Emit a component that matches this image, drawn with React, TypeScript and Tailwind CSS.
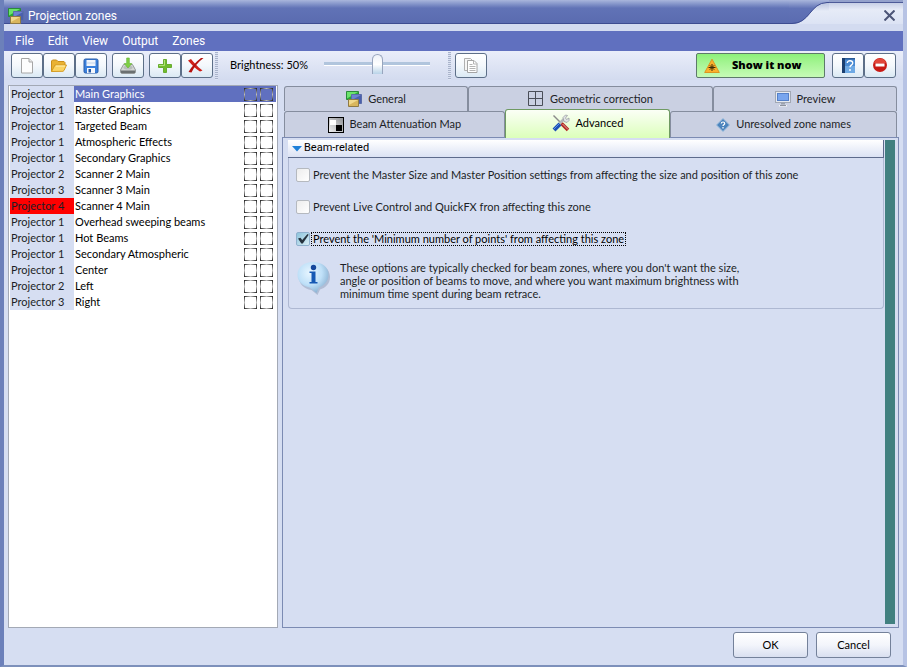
import { useState } from 'react';

const menus = ['File', 'Edit', 'View', 'Output', 'Zones'];

const zones = [
  { projector: 1, name: 'Main Graphics' },
  { projector: 1, name: 'Raster Graphics' },
  { projector: 1, name: 'Targeted Beam' },
  { projector: 1, name: 'Atmospheric Effects' },
  { projector: 1, name: 'Secondary Graphics' },
  { projector: 2, name: 'Scanner 2 Main' },
  { projector: 3, name: 'Scanner 3 Main' },
  { projector: 4, name: 'Scanner 4 Main' },
  { projector: 1, name: 'Overhead sweeping beams' },
  { projector: 1, name: 'Hot Beams' },
  { projector: 1, name: 'Secondary Atmospheric' },
  { projector: 1, name: 'Center' },
  { projector: 2, name: 'Left' },
  { projector: 3, name: 'Right' }
];

const toolButton =
  'flex h-[25px] w-8 items-center justify-center rounded-[3px] border border-[#5d6f88] bg-gradient-to-b from-white via-[#f4f8fc] to-[#dbe9f4]';
const tabBase =
  'flex h-full items-center justify-center border border-b-0 border-[#858d9e] bg-[#cad0e2] rounded-t-[3px] text-[#1c1e26]';

function ZonesIcon() {
  return (
    <svg width="16" height="16" viewBox="0 0 16 16">
      <path d="M.5.5h12v8H.5z" fill="#27a836" stroke="#2b8a3a" />
      <path d="M1 1h11L1 7.500z" fill="#6be36b" />
      <path d="M5.500 3.500h10v9h-10z" fill="#4a60ad" stroke="#5a6ca8" />
      <path d="M6 4h9L6 9z" fill="#6c84cf" />
      <path d="M2.500 8.500h10v7h-10z" fill="#d9b65c" stroke="#8f7a44" />
      <path d="M3 9h9l-9 5z" fill="#f0d88c" />
    </svg>
  );
}

function NewIcon() {
  return (
    <svg width="16" height="18" viewBox="0 0 16 18">
      <path d="M2.500 1.500h7.500l3.500 3.500v11h-11z" fill="#fdfdfd" stroke="#a6a6a6" />
      <path d="M10 1.500V5h3.500" fill="#e8e8e8" stroke="#a6a6a6" />
    </svg>
  );
}

function OpenIcon() {
  return (
    <svg width="18" height="16" viewBox="0 0 18 16">
      <path d="M1.500 13.500V3l1-1h4l1.500 1.500h6l1 1v3" fill="#e9b233" stroke="#c98f1c" />
      <path d="M1.500 13.500l3.500-6.500h11.500l-2.500 5.500-1 .8z" fill="#fbd463" stroke="#d49b20" />
      <path d="M5.800 8h9.300" stroke="#fff0b4" />
    </svg>
  );
}

function SaveIcon() {
  return (
    <svg width="16" height="16" viewBox="0 0 16 16">
      <rect x="1" y="1" width="14" height="14" rx="1.500" fill="#3a80dc" stroke="#2a5ca8" />
      <rect x="3.500" y="2" width="9" height="6" fill="#f1f5fb" />
      <path d="M4 5h8" stroke="#c3d4ea" />
      <rect x="4" y="10" width="8" height="5" fill="#f6f8fb" />
      <rect x="5.500" y="11" width="2.500" height="3.500" fill="#2458a6" />
    </svg>
  );
}

function ImportIcon() {
  return (
    <svg width="18" height="18" viewBox="0 0 18 18">
      <path d="M4.500 7.500h9l3 5.500v2.500l-1 1h-13l-1-1V13z" fill="#d3d6d5" stroke="#959a9b" />
      <path d="M2 13.500h14v2.500H2z" fill="#6b7071" />
      <ellipse cx="9" cy="10.500" rx="4.500" ry="2" fill="#b8bdbb" />
      <path d="M7.700 1h2.600v5.500h2.500L9 11 5.200 6.500h2.500z" fill="#7fd045" stroke="#6bb93a" strokeWidth=".7" />
    </svg>
  );
}

function AddIcon() {
  return (
    <svg width="16" height="16" viewBox="0 0 16 16">
      <path d="M6.500 1.500h3v5h5v3h-5v5h-3v-5h-5v-3h5z" fill="#71bd2b" stroke="#69ac31" />
      <path d="M7.500 2v5.500H2" stroke="#b0e375" fill="none" />
    </svg>
  );
}

function DeleteIcon() {
  return (
    <svg width="18" height="17" viewBox="0 0 18 17" className="mr-0.5">
      <path d="M1 3.500L4 2c3 3.500 6 7.500 11.500 11.500L13 14.500C8.500 12 5 8 1 3.500z" fill="#cf2018" />
      <path d="M16.500 1L14 1C9 5 4.500 9.500 1.500 15l3 .5C7 10 11 5 16.500 1z" fill="#b5120f" />
    </svg>
  );
}

function CopyIcon() {
  return (
    <svg width="16" height="17" viewBox="0 0 16 17">
      <path d="M1.500 1.500h6l3 3v9h-9z" fill="#f6f6f6" stroke="#b0b0b0" />
      <path d="M4.500 3.500h6.500l3 3v9H4.500z" fill="#fff" stroke="#a4a4a4" />
      <path d="M10.500 3.500v3.500h3.500M6.500 7.500h3M6.500 9.500h6M6.500 11.500h6M6.500 13.500h6" fill="none" stroke="#b4b4b4" />
    </svg>
  );
}

function WarningIcon() {
  return (
    <svg width="16" height="16" viewBox="0 0 16 16">
      <path d="M8 1.200L15.300 14.500H.7z" fill="#fbb02c" stroke="#dc9620" strokeLinejoin="round" />
      <path d="M8 6v7M4.500 9.500h7M5.800 7.300l4.400 4.400M10.200 7.300l-4.400 4.400" stroke="#3b2a08" />
    </svg>
  );
}

function HelpIcon() {
  return (
    <svg width="15" height="17" viewBox="0 0 15 17">
      <path d="M1 1h13v15H1z" fill="#4a8ad2" />
      <path d="M1 1h3v15H1z" fill="#1b3f70" />
      <path d="M4 1h10v1.500H4z" fill="#2b5a96" />
      <path d="M4 9h10v7H4z" fill="#6ea9e4" />
      <path d="M6.300 6C6.300 2.800 12 3 11.700 6.200c-.2 2-2.700 2-2.700 4M9 12v2" fill="none" stroke="#fff" strokeWidth="1.400" />
    </svg>
  );
}

function StopIcon() {
  return (
    <svg width="16" height="16" viewBox="0 0 16 16" className="mb-0.5">
      <circle cx="8" cy="8" r="7" fill="#c81a15" />
      <path d="M2 6a6.300 6.300 0 0 1 12 0z" fill="#e2463a" />
      <rect x="3.500" y="6.500" width="9" height="3" fill="#fff" />
    </svg>
  );
}

function GridIcon() {
  return (
    <svg width="16" height="16" viewBox="0 0 16 16">
      <path d="M.5.5h14v14H.5zM7.500.5v14M.5 7.500h14" fill="none" stroke="#4a4e58" />
    </svg>
  );
}

function MonitorIcon() {
  return (
    <svg width="16" height="16" viewBox="0 0 16 16">
      <rect x=".5" y=".5" width="15" height="11" fill="#e6eaf0" stroke="#a2a8b4" />
      <rect x="2.500" y="2.500" width="11" height="7" fill="#78a5ee" stroke="#5580c8" />
      <path d="M6 12h4v1.500H6z" fill="#9ca3ae" />
      <path d="M4 14h8v1.500H4z" fill="#f4f5f7" />
      <path d="M5 14.500h6" stroke="#8d939e" />
    </svg>
  );
}

function AttenuationIcon() {
  return (
    <svg width="16" height="16" viewBox="0 0 16 16">
      <defs>
        <linearGradient id="shade" x1="0" y1="1" x2="1" y2="0">
          <stop offset="0" stopColor="#f2f2f3" />
          <stop offset="1" stopColor="#8f9195" />
        </linearGradient>
      </defs>
      <rect x=".5" y=".5" width="15" height="15" fill="url(#shade)" stroke="#000" />
      <path d="M2 3h6v5H2z" fill="#fff" />
      <path d="M8 8h6v6H8z" fill="#000" />
    </svg>
  );
}

function ToolsIcon() {
  return (
    <svg width="18" height="18" viewBox="0 0 18 18">
      <path d="M1.500 1.500l8 8" stroke="#8a8a8a" strokeWidth="1.500" />
      <path d="M8 9l4-4" stroke="#b3b7bb" strokeWidth="2.500" />
      <path d="M11 3.500L13.500 1l2 .5-2 2.500 1 1.500 2.500-1.500v2.500l-2 2-3-1z" fill="#e0e3e5" stroke="#9a9ea2" strokeWidth=".8" />
      <path d="M9.500 9.500l6.500 6.500" stroke="#b32722" strokeWidth="3.600" />
      <path d="M10.500 10l5.500 5.500" stroke="#e5a8a2" />
      <path d="M8 10l-6 6" stroke="#1e51b5" strokeWidth="4" />
      <path d="M7 10l-5 5" stroke="#5c93e8" />
    </svg>
  );
}

function DiamondIcon() {
  return (
    <svg width="14" height="14" viewBox="0 0 14 14">
      <path d="M7 .5L13.500 7 7 13.500.5 7z" fill="#4c84bd" stroke="#9cbddd" />
      <path d="M5.300 5.500c0-2 3.400-2 3.400 0C8.700 6.800 7 6.700 7 8M7 9v1.500" fill="none" stroke="#fff" strokeWidth="1.200" />
    </svg>
  );
}

function InfoIcon() {
  return (
    <svg width="36" height="36" viewBox="0 0 36 36" className="shrink-0">
      <defs>
        <radialGradient id="bubble" cx="40%" cy="35%" r="65%">
          <stop offset="0" stopColor="#e8f6ff" />
          <stop offset=".6" stopColor="#bfe0f8" />
          <stop offset="1" stopColor="#8fb6d6" />
        </radialGradient>
      </defs>
      <path d="M18 3c9 0 16 5 16 13 0 7-5 11-10 12.500L21.500 34l-6-5C8 28 3 23 3 16 3 8 9 3 18 3z" fill="#8c9cb8" opacity=".5" />
      <path d="M17 1c9 0 15.500 5 15.500 12.500S27 25 23 26.500L20.500 32l-7-5.500C7 25 1.500 21 1.500 13.500 1.500 6 8 1 17 1z" fill="url(#bubble)" />
      <circle cx="17.500" cy="6.500" r="2.700" fill="#15489c" />
      <path d="M13.500 10.500h6V21h2v1.500h-8V21h2v-9h-2z" fill="#1659b4" />
    </svg>
  );
}

function Grip() {
  return (
    <div className="h-7 w-[3px] bg-[repeating-linear-gradient(#a9b3cb_0_1px,#dde4f3_1px_2px)]" />
  );
}

function Option({ id, text, checked, focused, onChange }: {
  id: string;
  text: string;
  checked: boolean;
  focused: boolean;
  onChange: () => void;
}) {
  return (
    <div className="flex h-8 items-center">
      <span className="relative flex">
        <input
          id={id}
          type="checkbox"
          checked={checked}
          onChange={onChange}
          className="h-[14px] w-[14px] appearance-none rounded-[2px] border border-[#b5b9bf] bg-gradient-to-br from-[#ededed] to-white checked:border-[#8fb0ce] checked:from-[#8dc4dc] checked:to-[#d9edf5]"
        />
        {checked && (
          <svg width="14" height="14" viewBox="0 0 14 14" className="pointer-events-none absolute left-0 top-0">
            <path d="M2 6.500l2.500-.8 1.700 2.300L11.500 2l1.200.8L6.800 11.500H5.300z" fill="#26323e" />
          </svg>
        )}
      </span>
      <label
        htmlFor={id}
        className={`ml-px border px-px leading-3 ${focused ? 'border-dotted border-black text-black' : 'border-transparent'}`}
      >
        {text}
      </label>
    </div>
  );
}

export default function App() {
  const [selected, setSelected] = useState(0);
  const [brightness, setBrightness] = useState(50);
  const [options, setOptions] = useState([false, false, true]);

  const toggle = (index: number) => {
    setOptions(prev => prev.map((value, i) => (i === index ? !value : value)));
  };

  return (
    <div className="flex min-h-screen flex-col overflow-hidden border-b-2 border-l-4 border-r-4 border-b-[#7d90bb] border-l-[#6c80ba] border-r-[#b7c3e4] bg-[#d6def2] font-[Lato,Arial,sans-serif] text-[11px] text-[#1c1e26]">
      {/* Title bar */}
      <header className="flex h-6 bg-[#d6def2] font-[Roboto,Arial,sans-serif]">
        <div className="flex flex-1 items-center gap-1 border-b border-[#3d4c91] bg-gradient-to-b from-[#a9b6dc] via-[#6173b6] via-35% to-[#5a6bb0] pl-1 pt-2">
          <ZonesIcon />
          <h1 className="text-xs text-white">Projection zones</h1>
        </div>
        <svg width="40" height="24" viewBox="0 0 40 24" className="shrink-0">
          <defs>
            <linearGradient id="bar" x1="0" y1="0" x2="0" y2="1">
              <stop offset="0" stopColor="#a9b6dc" />
              <stop offset=".35" stopColor="#6173b6" />
              <stop offset="1" stopColor="#5a6bb0" />
            </linearGradient>
            <linearGradient id="flap" x1="0" y1="0" x2="0" y2="1">
              <stop offset="0" stopColor="#b9c3de" />
              <stop offset=".4" stopColor="#e6ebf7" />
              <stop offset="1" stopColor="#dce3f4" />
            </linearGradient>
          </defs>
          <path d="M0 0h40v24H0z" fill="url(#bar)" />
          <path d="M3 24C21 24 21 3 38 2.500h2V24z" fill="url(#flap)" />
          <path d="M0 23.500h3C21 23.500 21 3 38 2.500h2" fill="none" stroke="#3d4c91" />
        </svg>
        <div className="flex w-[74px] flex-col bg-gradient-to-b from-[#b9c3de] via-[#e6ebf7] via-40% to-[#dce3f4]">
          <div className="h-[3px] border-b border-[#4d5b98] bg-[#94a2cc]" />
          <button aria-label="Close" className="ml-auto mr-2 mt-[7px]">
            <svg width="11" height="11" viewBox="0 0 11 11">
              <path d="M.5.5l10 10M10.500.5l-10 10" stroke="#4c5577" strokeWidth="2" />
            </svg>
          </button>
        </div>
      </header>
      <div className="h-[7px] bg-[#d3dbf0]" />

      {/* Menu */}
      <nav className="flex h-5 items-center gap-3 bg-[#6070bf] pl-2.5 font-[Roboto,Arial,sans-serif] text-xs text-white">
        {menus.map(menu => (
          <button key={menu} className="px-px">{menu}</button>
        ))}
      </nav>

      {/* Toolbar */}
      <div className="flex h-[29px] items-center bg-gradient-to-b from-[#eaeefa] to-[#d3dbef] pl-[7px] pr-[7px]">
        <div className="flex gap-[5px]">
          <div className="flex">
            <button aria-label="New" className={toolButton}><NewIcon /></button>
            <button aria-label="Open" className={toolButton}><OpenIcon /></button>
            <button aria-label="Save" className={toolButton}><SaveIcon /></button>
          </div>
          <button aria-label="Import" className={toolButton}><ImportIcon /></button>
          <div className="flex">
            <button aria-label="Add" className={toolButton}><AddIcon /></button>
            <button aria-label="Delete" className={toolButton}><DeleteIcon /></button>
          </div>
        </div>
        <div className="ml-0.5"><Grip /></div>
        <label htmlFor="brightness" className="ml-3 w-[94px] text-black">Brightness: {brightness}%</label>
        <input
          id="brightness"
          type="range"
          value={brightness}
          onChange={e => setBrightness(Number(e.target.value))}
          className="h-6 w-[106px] appearance-none bg-[linear-gradient(#b1c5dd_0_3px,#fff_3px_4px)] bg-[length:100%_4px] bg-[position:0_8px] bg-no-repeat [&::-webkit-slider-thumb]:mb-1 [&::-webkit-slider-thumb]:h-5 [&::-webkit-slider-thumb]:w-[11px] [&::-webkit-slider-thumb]:appearance-none [&::-webkit-slider-thumb]:rounded-t-full [&::-webkit-slider-thumb]:rounded-b-[2px] [&::-webkit-slider-thumb]:border [&::-webkit-slider-thumb]:border-b-0 [&::-webkit-slider-thumb]:border-[#98a5bd] [&::-webkit-slider-thumb]:bg-gradient-to-b [&::-webkit-slider-thumb]:from-[#eef2f8] [&::-webkit-slider-thumb]:via-white [&::-webkit-slider-thumb]:to-[#b8d3e8]"
        />
        <div className="ml-[18px] mr-1"><Grip /></div>
        <button aria-label="Copy" className={toolButton}><CopyIcon /></button>
        <button className="ml-auto flex h-[25px] w-[129px] items-center rounded-[2px] border border-[#5d7a6a] bg-gradient-to-b from-[#8df07a] to-[#c6fbb6] pl-[7px] font-['Open_Sans',sans-serif] text-[11px] font-extrabold text-black">
          <WarningIcon />
          <span className="ml-3">Show it now</span>
        </button>
        <div className="ml-[7px] flex">
          <button aria-label="Help" className={toolButton}><HelpIcon /></button>
          <button aria-label="Stop" className={toolButton}><StopIcon /></button>
        </div>
      </div>

      <main className="flex flex-1 gap-1 pl-1 pr-1 pt-[5px]">
        {/* Zone list */}
        <section className="w-[270px] shrink-0 border border-[#a3a9b5] bg-white px-px">
          <table className="w-full border-collapse">
            <tbody>
              {zones.map((zone, i) => (
                <tr
                  key={zone.name}
                  onClick={() => setSelected(i)}
                  className={i === selected ? 'h-4 bg-[#6070bf] text-white' : 'h-4 bg-white text-black'}
                >
                  <td className={`w-16 p-0 pl-px leading-4 text-[#1c1e26] ${zone.projector === 4 ? 'bg-[#ff0000]' : 'bg-[#d6def2]'}`}>
                    Projector {zone.projector}
                  </td>
                  <td className="p-0 pl-px leading-4">{zone.name}</td>
                  <td className="w-9 p-0">
                    <div className="flex gap-[3px] pl-1">
                      {[0, 1].map(n => (
                        <input
                          key={n}
                          type="checkbox"
                          aria-label={zone.name}
                          className="h-[13px] w-[13px] appearance-none bg-[linear-gradient(90deg,#222,#bbb_50%,#222),linear-gradient(90deg,#222,#bbb_50%,#222),linear-gradient(#222,#bbb_50%,#222),linear-gradient(#222,#bbb_50%,#222)] bg-[length:100%_1px,100%_1px,1px_100%,1px_100%] bg-[position:top,bottom,left,right] bg-no-repeat"
                        />
                      ))}
                    </div>
                  </td>
                </tr>
              ))}
            </tbody>
          </table>
        </section>

        <section className="flex min-w-0 flex-1 flex-col">
          {/* Tabs */}
          <div role="tablist" className="px-0.5 pt-px">
            <div className="flex h-[25px]">
              <button role="tab" className={`${tabBase} flex-[3] gap-1.5`}><ZonesIcon />General</button>
              <button role="tab" className={`${tabBase} flex-[4] gap-1.5`}><GridIcon />Geometric correction</button>
              <button role="tab" className={`${tabBase} flex-[3] gap-1.5`}><MonitorIcon />Preview</button>
            </div>
            <div className="flex h-[26px] items-end">
              <button role="tab" className={`${tabBase} w-[36%] gap-1.5`}><AttenuationIcon />Beam Attenuation Map</button>
              <button role="tab" aria-selected="true" className="relative z-10 -mb-px flex h-[29px] w-[27%] items-center justify-center gap-1.5 rounded-t-[3px] border border-b-0 border-[#6f9a62] bg-gradient-to-b from-[#fbfff6] to-[#dcffba] pb-0.5 text-black">
                <ToolsIcon />Advanced
              </button>
              <button role="tab" className={`${tabBase} flex-1 gap-1.5`}><DiamondIcon />Unresolved zone names</button>
            </div>
          </div>

          {/* Tab page */}
          <div className="flex flex-1 gap-px border border-[#7c8bb3] p-[3px] pl-[5px] pt-0.5">
            <div className="flex-1">
              <h2 className="flex h-[18px] items-center border-b border-r border-[#5d6b8c] bg-gradient-to-b from-white to-[#dbe2f4] pl-1 font-[Roboto,Arial,sans-serif] text-black">
                <svg width="10" height="6" viewBox="0 0 10 6" className="mr-0.5">
                  <path d="M0 0h10L5 5.500z" fill="#1d7fd8" />
                </svg>
                Beam-related
              </h2>
              <div className="rounded-b-[4px] border border-t-0 border-[#aeb8d2] px-[7px] pb-2 pt-px">
                <Option
                  id="master"
                  text="Prevent the Master Size and Master Position settings from affecting the size and position of this zone"
                  checked={options[0]}
                  focused={false}
                  onChange={() => toggle(0)}
                />
                <Option
                  id="live"
                  text="Prevent Live Control and QuickFX fron affecting this zone"
                  checked={options[1]}
                  focused={false}
                  onChange={() => toggle(1)}
                />
                <Option
                  id="points"
                  text="Prevent the 'Minimum number of points' from affecting this zone"
                  checked={options[2]}
                  focused
                  onChange={() => toggle(2)}
                />
                <div className="flex gap-2 pt-1.5">
                  <InfoIcon />
                  <p className="leading-[13px]">
                    These options are typically checked for beam zones, where you don't want the size,<br />
                    angle or position of beams to move, and where you want maximum brightness with<br />
                    minimum time spent during beam retrace.
                  </p>
                </div>
              </div>
            </div>
            <div className="w-2.5 bg-[#418080]" />
          </div>
        </section>
      </main>

      {/* Footer */}
      <footer className="flex h-[37px] justify-end gap-2 pr-3 pt-1 text-black">
        <button className="h-[26px] w-[75px] rounded-[3px] border border-[#74819a] bg-gradient-to-b from-white via-[#f3f5fb] to-[#d9dff0]">OK</button>
        <button className="h-[26px] w-[75px] rounded-[3px] border border-[#74819a] bg-gradient-to-b from-white via-[#f3f5fb] to-[#d9dff0]">Cancel</button>
      </footer>
    </div>
  );
}
